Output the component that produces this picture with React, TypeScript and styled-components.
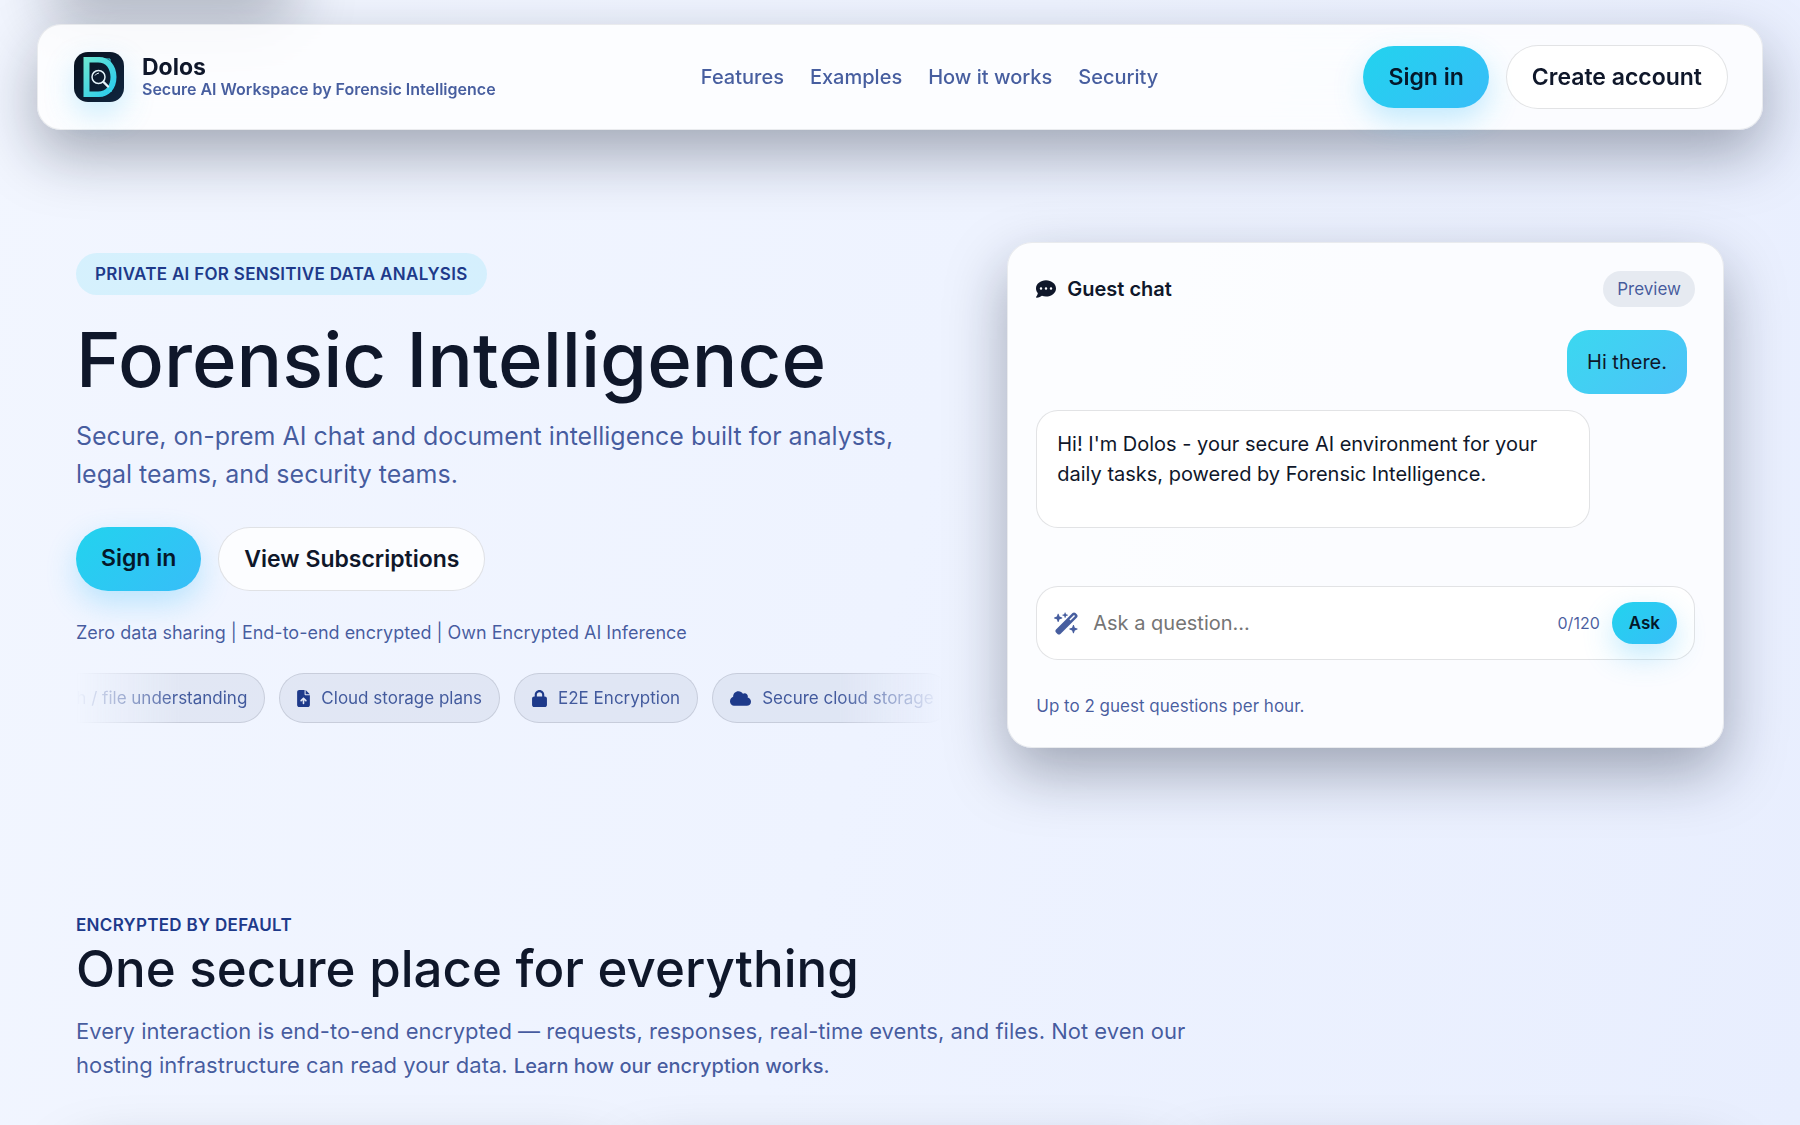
import React, { useState } from "react";
import styled, { createGlobalStyle, css } from "styled-components";
import {
  FaCloud,
  FaCommentDots,
  FaFileArrowUp,
  FaLock,
  FaMagnifyingGlass,
  FaWandMagicSparkles,
} from "react-icons/fa6";

const ink = "#0f172a";
const navy = "#1e3a8a";
const muted = "rgba(30, 58, 138, 0.82)";
const hairline = "rgba(15, 23, 42, 0.12)";
const panelShadow = "0 24px 60px rgba(15, 23, 42, 0.35)";

const GlobalStyle = createGlobalStyle`
  *, *::before, *::after { box-sizing: border-box; }
  body {
    margin: 0;
    color: ${ink};
    font-family: Inter, "Liberation Sans", sans-serif;
    background: #eef2ff;
  }
  h1, h2, p { margin: 0; }
  a { color: inherit; text-decoration: none; }
  button, input { font: inherit; }
`;

const Page = styled.div`
  position: relative;
  min-height: 100vh;
  overflow: hidden;
  background: linear-gradient(105deg, #f2f6ff 0%, #eef3ff 50%, #e8eefe 100%);
`;

const SkipLink = styled.a`
  position: absolute;
  left: 48px;
  top: -60px;
  width: 248px;
  height: 52px;
  border-radius: 24px;
  background: #ffffff;
  box-shadow: ${panelShadow};
`;

const Header = styled.header`
  position: relative;
  display: flex;
  align-items: center;
  justify-content: space-between;
  margin: 24px 37px 0;
  padding: 20px 34px 20px 36px;
  border: 1px solid rgba(15, 23, 42, 0.08);
  border-radius: 24px;
  background: rgba(255, 255, 255, 0.8);
  backdrop-filter: blur(18px);
  box-shadow: ${panelShadow};
`;

const Brand = styled.a`
  display: flex;
  align-items: center;
  gap: 18px;
`;

const LogoTile = styled.svg`
  width: 50px;
  height: 50px;
  border-radius: 14px;
  box-shadow: 0 12px 30px rgba(56, 189, 248, 0.25);
`;

const BrandText = styled.span`
  display: flex;
  flex-direction: column;
`;

const BrandName = styled.strong`
  font-size: 23px;
  line-height: 24px;
  font-weight: 700;
`;

const BrandTagline = styled.span`
  font-size: 16px;
  line-height: 20px;
  font-weight: 600;
  color: ${muted};
`;

const Nav = styled.nav`
  display: flex;
  gap: 26px;
  font-size: 20px;
  line-height: 24px;
  font-weight: 500;
  color: ${muted};
`;

const Actions = styled.div`
  display: flex;
  align-items: center;
  gap: 17px;
`;

const primaryFill = css`
  border: 0;
  background: linear-gradient(135deg, #22d3ee, #38bdf8);
  box-shadow: 0 12px 30px rgba(56, 189, 248, 0.3);
  color: #04182a;
`;

const outlineFill = css`
  border: 1px solid ${hairline};
  background: rgba(255, 255, 255, 0.8);
  color: ${ink};
`;

const Pill = styled.a<{ $primary?: boolean }>`
  padding: 17px 25px;
  border-radius: 32px;
  font-size: 23px;
  line-height: 28px;
  font-weight: 600;
  ${(p) => (p.$primary ? primaryFill : outlineFill)}
`;

const Hero = styled.section`
  display: grid;
  grid-template-columns: minmax(0, 1.21fr) minmax(0, 1fr);
  gap: 64px;
  align-items: center;
  margin: 112px 76px 0;
`;

const Intro = styled.div`
  display: flex;
  flex-direction: column;
  align-items: flex-start;
  padding-bottom: 14px;
`;

const Badge = styled.p`
  padding: 11px 19px;
  border-radius: 21px;
  background: rgba(34, 211, 238, 0.13);
  font-size: 17px;
  line-height: 20px;
  font-weight: 600;
  letter-spacing: 0.3px;
  text-transform: uppercase;
  color: ${navy};
`;

const Title = styled.h1`
  margin-top: 22px;
  font-size: 76px;
  line-height: 84px;
  font-weight: 500;
`;

const Lead = styled.p`
  margin-top: 16px;
  font-size: 25px;
  line-height: 38px;
  color: ${muted};
`;

const HeroActions = styled.div`
  display: flex;
  gap: 17px;
  margin-top: 34px;
`;

const Assurance = styled.p`
  margin-top: 30px;
  font-size: 18px;
  line-height: 24px;
  color: ${muted};
`;

const Ticker = styled.div`
  width: 100%;
  margin-top: 28px;
  overflow: hidden;
  mask-image: linear-gradient(90deg, transparent, #000 12%, #000 88%, transparent);
`;

const TickerTrack = styled.ul`
  display: flex;
  gap: 14px;
  width: max-content;
  margin: 0 0 0 -92px;
  padding: 0;
  list-style: none;
`;

const Chip = styled.li`
  display: flex;
  align-items: center;
  gap: 11px;
  padding: 14px 17px;
  border: 1px solid ${hairline};
  border-radius: 25px;
  background: rgba(148, 163, 184, 0.16);
  font-size: 17px;
  line-height: 20px;
  white-space: nowrap;
  color: ${muted};
`;

const ChipIcon = styled.span<{ $width: number }>`
  display: flex;
  width: ${(p) => p.$width}px;
  color: ${navy};

  svg {
    width: 100%;
    height: 17px;
  }
`;

const ChatCard = styled.section`
  display: flex;
  flex-direction: column;
  padding: 28px 28px 31px;
  border: 1px solid rgba(15, 23, 42, 0.08);
  border-radius: 25px;
  background: rgba(255, 255, 255, 0.8);
  box-shadow: ${panelShadow};
`;

const ChatHeader = styled.div`
  display: flex;
  align-items: center;
  justify-content: space-between;
`;

const ChatTitle = styled.h2`
  display: flex;
  align-items: center;
  gap: 11px;
  font-size: 20px;
  line-height: 24px;
  font-weight: 600;
`;

const PreviewTag = styled.span`
  padding: 8px 14px;
  border-radius: 18px;
  background: rgba(148, 163, 184, 0.2);
  font-size: 17px;
  line-height: 20px;
  color: ${muted};
`;

const bubble = css`
  border-radius: 22px;
  font-size: 20px;
  line-height: 30px;
`;

const UserBubble = styled.p`
  ${bubble}
  align-self: flex-end;
  margin: 23px 8px 0 0;
  padding: 17px 20px;
  background: linear-gradient(135deg, #3bd8f0, #4dc2f8);
`;

const BotBubble = styled.p`
  ${bubble}
  width: 84%;
  min-height: 118px;
  margin-top: 16px;
  padding: 18px 20px;
  border: 1px solid ${hairline};
  background: #ffffff;
`;

const AskForm = styled.form`
  display: flex;
  align-items: center;
  margin-top: 58px;
  padding: 15px 17px;
  border: 1px solid ${hairline};
  border-radius: 22px;
  background: #ffffff;
  color: ${muted};
`;

const AskInput = styled.input`
  flex: 1;
  min-width: 0;
  margin: 0 12px 0 14px;
  padding: 0;
  border: 0;
  outline: 0;
  background: transparent;
  font-size: 20px;
  line-height: 24px;
  color: ${ink};

  &::placeholder { color: #757575; }
`;

const Counter = styled.span`
  margin-right: 12px;
  font-size: 16px;
  line-height: 20px;
`;

const AskButton = styled.button`
  ${primaryFill}
  padding: 11px 17px;
  border-radius: 21px;
  font-size: 17px;
  line-height: 20px;
  font-weight: 600;
`;

const Quota = styled.p`
  margin-top: 36px;
  font-size: 17px;
  line-height: 20px;
  color: ${muted};
`;

const Encryption = styled.section`
  margin: 167px 76px 0;
`;

const Eyebrow = styled.p`
  font-size: 17px;
  line-height: 20px;
  font-weight: 600;
  letter-spacing: 0.3px;
  text-transform: uppercase;
  color: ${navy};
`;

const SectionTitle = styled.h2`
  margin-top: 3px;
  font-size: 51px;
  line-height: 62px;
  font-weight: 500;
`;

const SectionText = styled.p`
  max-width: 1140px;
  margin-top: 14px;
  font-size: 22px;
  line-height: 34px;
  color: ${muted};
`;

const TextLink = styled.a`
  font-size: 20px;
  font-weight: 500;
`;

const FeatureRow = styled.div`
  display: grid;
  grid-template-columns: repeat(3, 1fr);
  gap: 24px;
  height: 0;
  margin-top: 54px;
`;

const FeatureCard = styled.article`
  height: 160px;
  border-radius: 24px;
  background: #fbfcff;
  box-shadow: ${panelShadow};
`;

const navItems = ["Features", "Examples", "How it works", "Security"];

const chips = [
  { icon: <FaMagnifyingGlass />, iconWidth: 17, label: "Search / file understanding" },
  { icon: <FaFileArrowUp />, iconWidth: 13, label: "Cloud storage plans" },
  { icon: <FaLock />, iconWidth: 15, label: "E2E Encryption" },
  { icon: <FaCloud />, iconWidth: 21, label: "Secure cloud storage" },
];

function Logo() {
  return (
    <LogoTile viewBox="0 0 50 50" aria-hidden="true">
      <defs>
        <linearGradient id="letter" x1="0" y1="0" x2="1" y2="1">
          <stop offset="0" stopColor="#6ee7d0" />
          <stop offset="1" stopColor="#22c8f0" />
        </linearGradient>
        <linearGradient id="tile" x1="0" y1="0" x2="1" y2="1">
          <stop offset="0" stopColor="#07111f" />
          <stop offset="1" stopColor="#10263f" />
        </linearGradient>
      </defs>
      <rect width="50" height="50" fill="url(#tile)" />
      <path
        fill="url(#letter)"
        fillRule="evenodd"
        d="M9.500 5H25c10 0 17.500 8 17.500 20S35 45 25 45H9.500zM15.500 10.500v29H24c8 0 12.500-6 12.500-14.500S32 10.500 24 10.500z"
      />
      <path d="M31 7h5v5M35 39h3" fill="none" stroke="#42d9e6" strokeWidth="1" />
      <circle cx="24.500" cy="25" r="6.500" fill="#0c1b2e" stroke="#e4f3fa" strokeWidth="1.500" />
      <path d="M21 23.500q1-2 4-2.500" fill="none" stroke="#e4f3fa" strokeWidth="1" />
      <path d="M29.500 30l4.500 4.500" stroke="#e4f3fa" strokeWidth="2.400" strokeLinecap="round" />
    </LogoTile>
  );
}

export default function App() {
  const [question, setQuestion] = useState("");

  return (
    <>
      <GlobalStyle />
      <Page>
        <SkipLink href="#main" aria-label="Skip to content" />
        <Header>
          <Brand href="#">
            <Logo />
            <BrandText>
              <BrandName>Dolos</BrandName>
              <BrandTagline>Secure AI Workspace by Forensic Intelligence</BrandTagline>
            </BrandText>
          </Brand>
          <Nav>
            {navItems.map((item) => (
              <a key={item} href="#">{item}</a>
            ))}
          </Nav>
          <Actions>
            <Pill href="#" $primary>Sign in</Pill>
            <Pill href="#">Create account</Pill>
          </Actions>
        </Header>

        <main id="main">
          <Hero>
            <Intro>
              <Badge>Private AI for sensitive data analysis</Badge>
              <Title>Forensic Intelligence</Title>
              <Lead>
                Secure, on-prem AI chat and document intelligence built for analysts, legal
                teams, and security teams.
              </Lead>
              <HeroActions>
                <Pill href="#" $primary>Sign in</Pill>
                <Pill href="#">View Subscriptions</Pill>
              </HeroActions>
              <Assurance>
                Zero data sharing | End-to-end encrypted | Own Encrypted AI Inference
              </Assurance>
              <Ticker>
                <TickerTrack>
                  {chips.map((chip) => (
                    <Chip key={chip.label}>
                      <ChipIcon $width={chip.iconWidth}>{chip.icon}</ChipIcon>
                      {chip.label}
                    </Chip>
                  ))}
                </TickerTrack>
              </Ticker>
            </Intro>

            <ChatCard>
              <ChatHeader>
                <ChatTitle>
                  <FaCommentDots />
                  Guest chat
                </ChatTitle>
                <PreviewTag>Preview</PreviewTag>
              </ChatHeader>
              <UserBubble>Hi there.</UserBubble>
              <BotBubble>
                Hi! I'm Dolos - your secure AI environment for your daily tasks, powered by
                Forensic Intelligence.
              </BotBubble>
              <AskForm onSubmit={(e) => e.preventDefault()}>
                <FaWandMagicSparkles size={25} />
                <AskInput
                  aria-label="Ask a question"
                  placeholder="Ask a question..."
                  maxLength={120}
                  value={question}
                  onChange={(e) => setQuestion(e.target.value)}
                />
                <Counter>{question.length}/120</Counter>
                <AskButton type="submit">Ask</AskButton>
              </AskForm>
              <Quota>Up to 2 guest questions per hour.</Quota>
            </ChatCard>
          </Hero>

          <Encryption>
            <Eyebrow>Encrypted by default</Eyebrow>
            <SectionTitle>One secure place for everything</SectionTitle>
            <SectionText>
              Every interaction is end-to-end encrypted — requests, responses, real-time
              events, and files. Not even our hosting infrastructure can read your data.{" "}
              <TextLink href="#">Learn how our encryption works.</TextLink>
            </SectionText>
            <FeatureRow>
              <FeatureCard />
              <FeatureCard />
              <FeatureCard />
            </FeatureRow>
          </Encryption>
        </main>
      </Page>
    </>
  );
}
